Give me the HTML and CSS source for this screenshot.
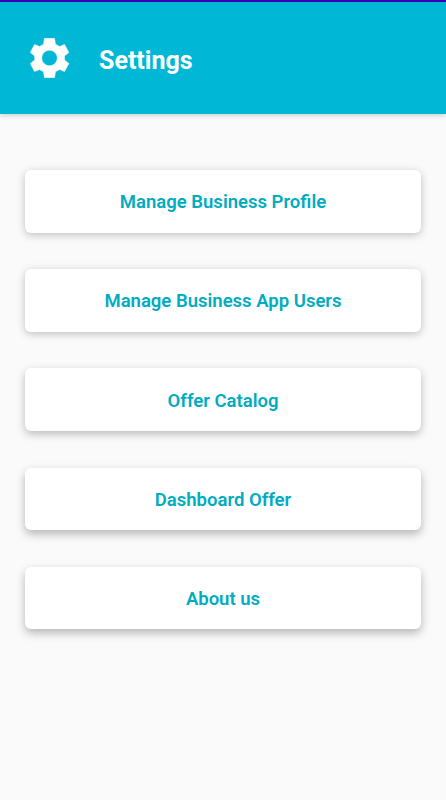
FILE: index.html
```html
<!DOCTYPE html>
<html lang="en">
<head>
  <meta charset="UTF-8">
  <meta name="viewport" content="width=device-width, initial-scale=1.0">
  <title>Settings</title>
  <link rel="stylesheet" href="styles.css">
</head>
<body>

  <header class="header">
    <svg class="icon" viewBox="0 0 40 40" aria-hidden="true">
      <path fill-rule="evenodd" d="M14.500 0.200h10l1 6 4 2.300 5-2.100L38.900 14.500 34.500 18v4l4.400 3.500-4.400 8.100-5-2.100-4 2.300-1 6h-10l-1-6-4-2.300-5 2.100L0.300 25.500 4.700 22v-4L0.300 14.500l4.200-8.100 5 2.100 4-2.300zM19.500 12.200a7.800 7.800 0 1 0 0 15.600 7.800 7.800 0 0 0 0-15.600z"/>
    </svg>
    <h1>Settings</h1>
  </header>

  <main class="menu">
    <button>Manage Business Profile</button>
    <button>Manage Business App Users</button>
    <button>Offer Catalog</button>
    <button>Dashboard Offer</button>
    <button>About us</button>
  </main>

</body>
</html>
```
FILE: styles.css
```css
* {
  box-sizing: border-box;
}

body {
  margin: 0;
  min-height: 100vh;
  font-family: Roboto, sans-serif;
  background-color: #fafafa;
}

.header {
  display: flex;
  align-items: center;
  height: 114px;
  padding: 0 30px;
  border-top: 2px solid #3700b3;
  background-color: #00b8d6;
  box-shadow: 0 1px 6px rgba(0, 0, 0, 0.2);
}

.icon {
  width: 40px;
  height: 40px;
  fill: #fff;
  stroke: #fff;
  stroke-width: 0.5;
  stroke-linejoin: round;
}

.header h1 {
  margin: 4px 0 0 29px;
  font-size: 25px;
  font-weight: 700;
  color: #fff;
}

.menu {
  display: flex;
  flex-direction: column;
  gap: 36.75px;
  padding: 56.2px 25px;
}

.menu button {
  height: 62.4px;
  padding: 1px 0 0;
  border: none;
  border-radius: 6px;
  background-color: #fff;
  box-shadow: 0 2px 8px rgba(0, 0, 0, 0.24);
  color: #00acc1;
  font-family: inherit;
  font-size: 18.5px;
  font-weight: 600;
}

.menu button:nth-child(n+3) {
  padding-top: 2px;
  box-shadow: 0 3px 9px rgba(0, 0, 0, 0.26);
}

.menu button:nth-child(n+4) {
  box-shadow: 0 4px 10px rgba(0, 0, 0, 0.28);
}
```
